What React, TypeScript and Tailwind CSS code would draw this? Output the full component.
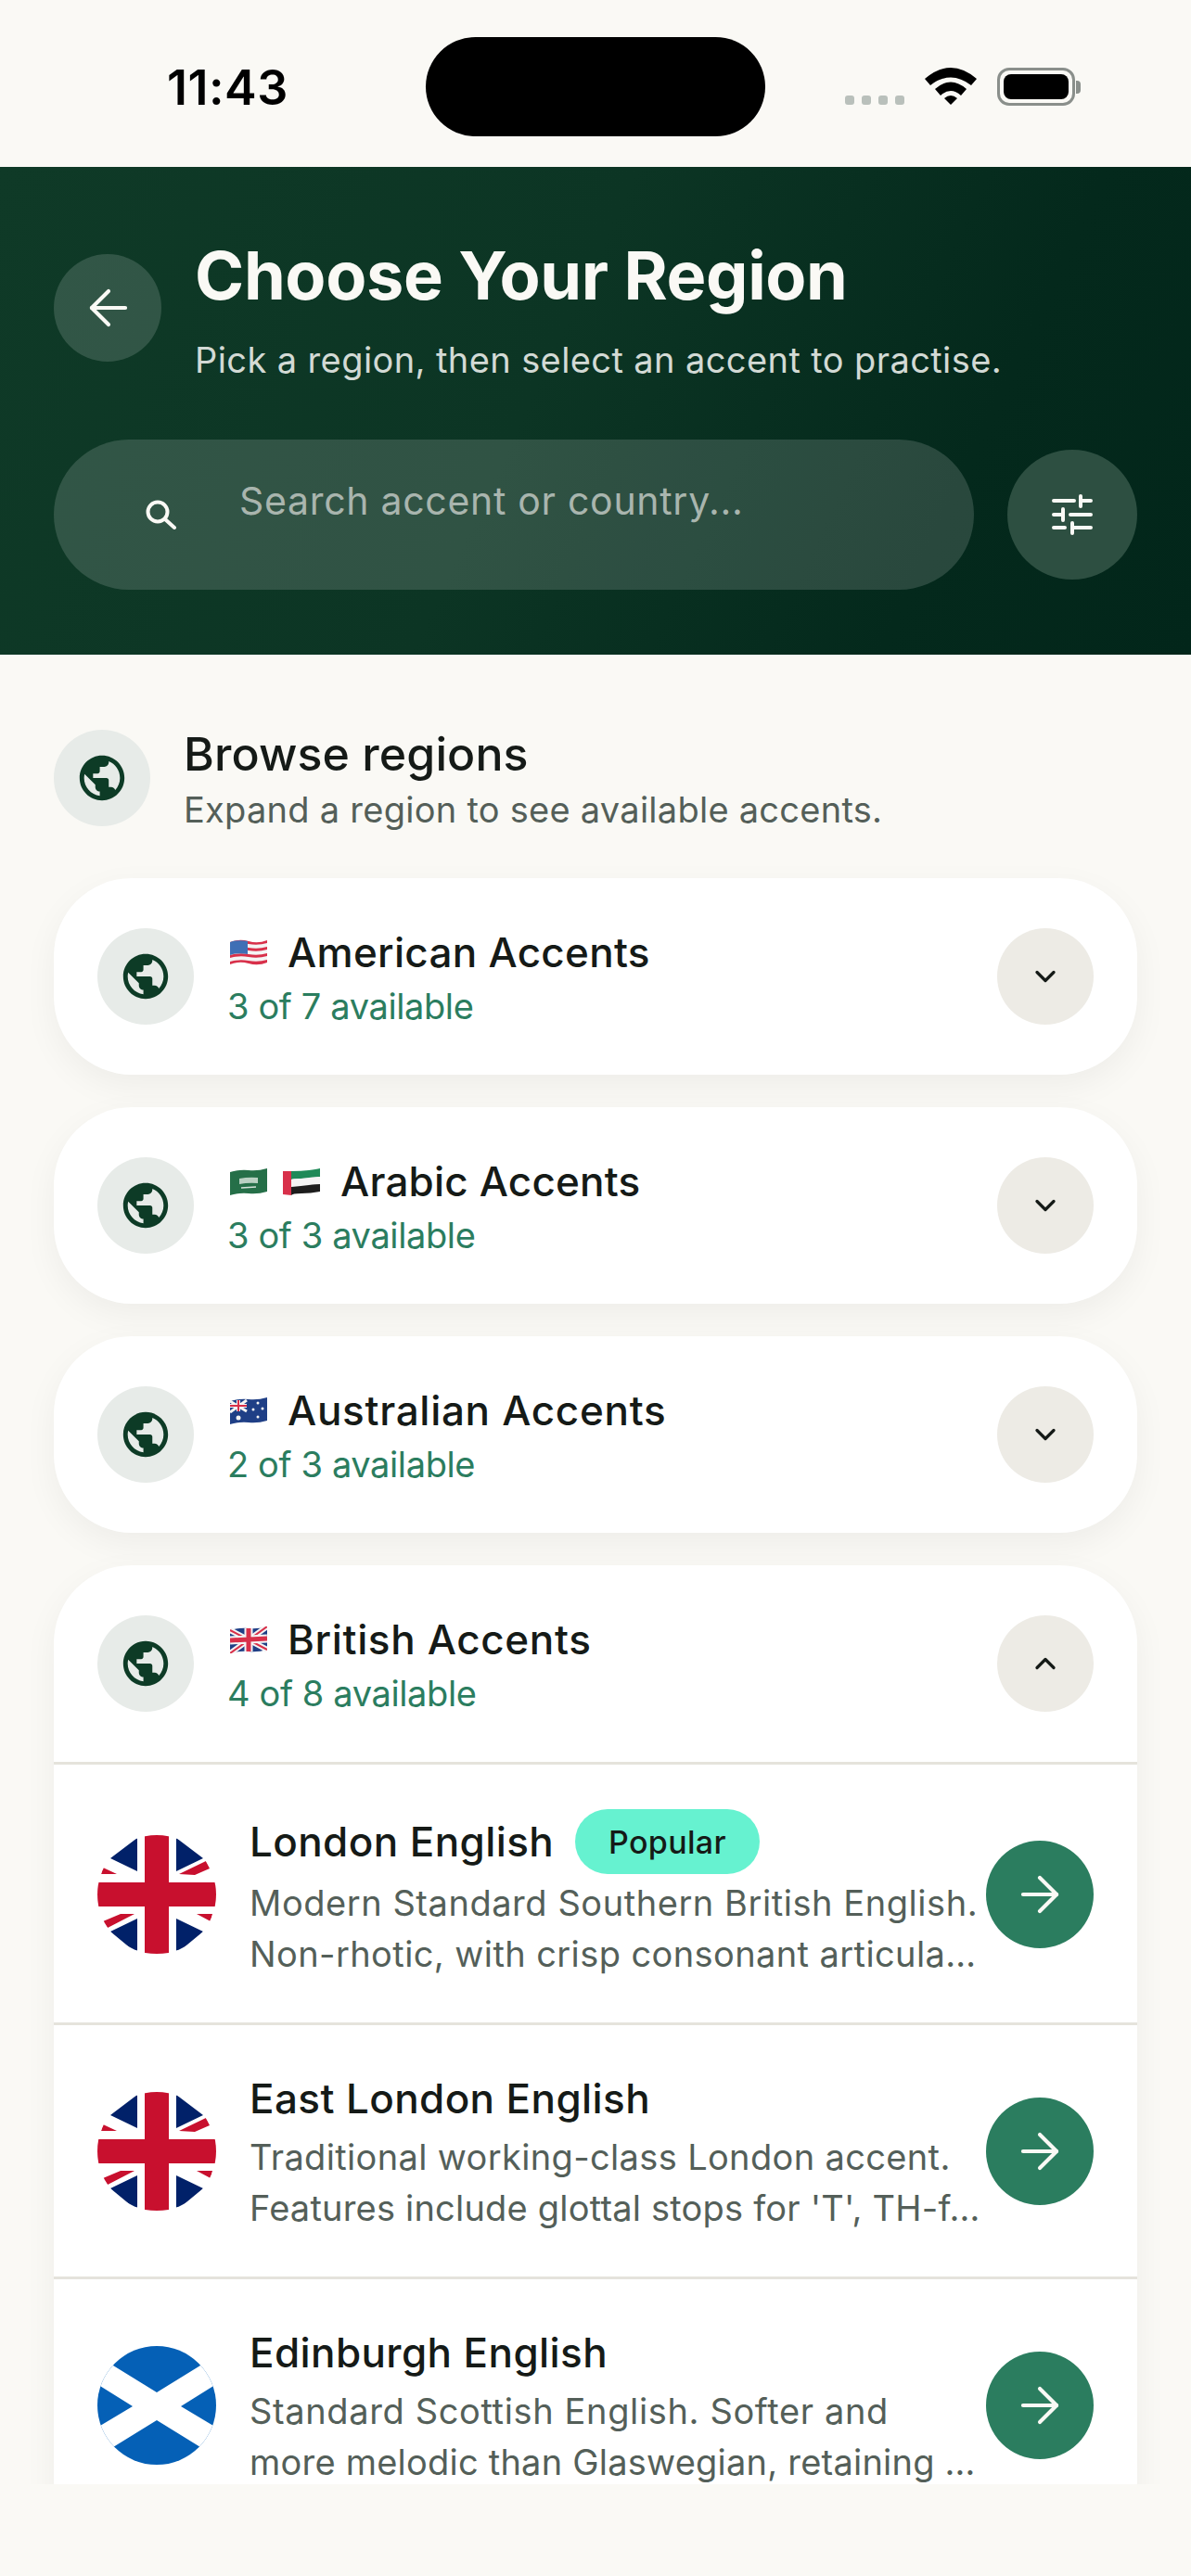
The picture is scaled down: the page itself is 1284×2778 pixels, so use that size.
import { ArrowLeft, ArrowRight, ChevronDown, ChevronUp } from "lucide-react";
import { MdPublic } from "react-icons/md";

const FONT = "font-['Inter','Liberation_Sans',sans-serif]";

const UsFlag = () => (
    <svg viewBox="0 0 40 29" className="w-[40px] h-[29px]">
        <path d="M0 3 Q10 -1 20 2 T40 1 V25 Q30 29 20 26 T0 27 Z" fill="#f4f4f4" />
        <path d="M0 3 Q10 -1 20 2 T40 1 V4 Q30 7 20 5 T0 6 Z" fill="#d8304a" />
        <path d="M0 10 Q10 7 20 9 T40 8 V11 Q30 14 20 12 T0 13 Z" fill="#d8304a" />
        <path d="M0 17 Q10 14 20 16 T40 15 V18 Q30 21 20 19 T0 20 Z" fill="#d8304a" />
        <path d="M0 24 Q10 21 20 23 T40 22 V25 Q30 29 20 26 T0 27 Z" fill="#d8304a" />
        <path d="M0 3 Q9 0 19 2 V16 Q9 14 0 17 Z" fill="#3f6fb5" />
    </svg>
);

const UkFlag = () => (
    <svg viewBox="0 0 40 29" className="w-[40px] h-[29px]">
        <path d="M0 4 Q10 1 20 2 T40 0 V25 Q30 28 20 27 T0 29 Z" fill="#1f3f86" />
        <path d="M0 4 L40 25 M40 0 L0 29" stroke="#f4f4f4" strokeWidth="6" />
        <path d="M0 4 L40 25 M40 0 L0 29" stroke="#d8304a" strokeWidth="2" />
        <path d="M20 2 V27 M0 15 L40 13" stroke="#f4f4f4" strokeWidth="9" />
        <path d="M20 2 V27 M0 15 L40 13" stroke="#d8304a" strokeWidth="5" />
    </svg>
);

const AuFlag = () => (
    <svg viewBox="0 0 40 29" className="w-[40px] h-[29px]">
        <path d="M0 4 Q10 1 20 2 T40 0 V25 Q30 28 20 27 T0 29 Z" fill="#1f3f86" />
        <path d="M0 4 L18 15 M18 3 L0 16" stroke="#f4f4f4" strokeWidth="3" />
        <path d="M9 3 V15 M0 9 H18" stroke="#f4f4f4" strokeWidth="4" />
        <path d="M9 3 V15 M0 9 H18" stroke="#d8304a" strokeWidth="2" />
        <circle cx="9" cy="22" r="2.5" fill="#f4f4f4" />
        <circle cx="30" cy="6" r="1.5" fill="#f4f4f4" />
        <circle cx="25" cy="13" r="1.5" fill="#f4f4f4" />
        <circle cx="35" cy="12" r="1.5" fill="#f4f4f4" />
        <circle cx="30" cy="21" r="1.5" fill="#f4f4f4" />
    </svg>
);

const SaFlag = () => (
    <svg viewBox="0 0 40 29" className="w-[40px] h-[29px]">
        <path d="M0 4 Q10 1 20 2 T40 0 V25 Q30 28 20 27 T0 29 Z" fill="#256f48" />
        <path d="M10 11 Q20 9 30 10 V16 Q20 15 10 17 Z" fill="#b9d0c2" />
        <path d="M12 21 L28 20" stroke="#d5e2da" strokeWidth="1.5" />
    </svg>
);

const AeFlag = () => (
    <svg viewBox="0 0 40 29" className="w-[40px] h-[29px]">
        <path d="M0 3 L9 3 V29 L0 28 Z" fill="#d8304a" />
        <path d="M9 3 Q20 3 28 2 T40 0 V9 Q30 11 20 11 T9 12 Z" fill="#1f8a58" />
        <path d="M9 12 Q20 11 28 10 T40 9 V17 Q30 19 20 19 T9 20 Z" fill="#f4f4f4" />
        <path d="M9 20 Q20 19 28 18 T40 17 V25 Q30 27 20 27 T9 29 Z" fill="#1d1d1d" />
    </svg>
);

const UnionJack = () => (
    <svg viewBox="0 0 128 128" className="w-[128px] h-[128px] shrink-0">
        <clipPath id="ukClip"><circle cx="64" cy="64" r="64" /></clipPath>
        <g clipPath="url(#ukClip)">
            <rect width="128" height="128" fill="#ffffff" />
            <path d="M14 25 L43 39 V3 Z M85 3 V39 L114 25 Z M14 104 L43 90 V128 Z M85 90 V128 L114 104 Z" fill="#012169" />
            <path d="M6 35 L21 42 H4 Z M88 42 L117 28 L121 36 L105 43 Z M40 85 H25 L6 93 L11 100 Z M107 85 H124 L122 93 Z" fill="#c8102e" />
            <path d="M51 0 H77 V51 H128 V77 H77 V128 H51 V77 H0 V51 H51 Z" fill="#c8102e" />
        </g>
    </svg>
);

const Saltire = () => (
    <svg viewBox="0 0 128 128" className="w-[128px] h-[128px] shrink-0">
        <clipPath id="scClip"><circle cx="64" cy="64" r="64" /></clipPath>
        <g clipPath="url(#scClip)">
            <rect width="128" height="128" fill="#0560b6" />
            <path d="M64 50 L140 3 L170 15 L90 65 L170 113 L140 127 L64 80 L-12 127 L-42 113 L38 65 L-42 15 L-12 3 Z" fill="#ffffff" />
        </g>
    </svg>
);

const TuneIcon = () => (
    <svg viewBox="0 0 44 44" className="w-[44px] h-[44px]" fill="none" stroke="#faf9f5" strokeWidth="4" strokeLinecap="round">
        <path d="M2 7 H24 M31 2 V13 M31 7 H42 M2 22 H12 M12 16 V28 M20 22 H42 M2 36 H14 M22 31 V42 M22 36 H42" />
    </svg>
);

const SearchIcon = () => (
    <svg viewBox="0 0 34 32" className="w-[34px] h-[32px] shrink-0" fill="none" stroke="#faf9f5" strokeWidth="4" strokeLinecap="round">
        <circle cx="13" cy="13" r="10.5" />
        <path d="M21 21 L31 30" />
    </svg>
);

const WifiIcon = () => (
    <svg viewBox="0 0 56 42" className="w-[56px] h-[42px]">
        <path d="M0 13 Q28 -11 56 13 L50 20 Q28 3 6 20 Z" fill="#000" />
        <path d="M11 24 Q28 9 45 24 L39 31 Q28 21 17 31 Z" fill="#000" />
        <path d="M21 34 Q28 28 35 34 L28 41 Z" fill="#000" />
    </svg>
);

const GlobeBadge = () => (
    <div className="w-[104px] h-[104px] rounded-full bg-[#e7ebe8] flex items-center justify-center shrink-0">
        <MdPublic size={58} color="#0d3b26" />
    </div>
);

const regions = [
    { name: "American Accents", count: "3 of 7 available", flags: [UsFlag], tracking: "tracking-[0.3px]" },
    { name: "Arabic Accents", count: "3 of 3 available", flags: [SaFlag, AeFlag], tracking: "tracking-[0.2px]" },
    { name: "Australian Accents", count: "2 of 3 available", flags: [AuFlag], tracking: "tracking-[0.7px]" },
];

const british = { name: "British Accents", count: "4 of 8 available", flags: [UkFlag], tracking: "tracking-[0.65px]" };

const accents = [
    {
        name: "London English",
        flag: UnionJack,
        popular: true,
        rowClass: "h-[281px] pt-[2px]",
        lines: [
            { text: "Modern Standard Southern British English.", tracking: "tracking-[0.55px]" },
            { text: "Non-rhotic, with crisp consonant articula…", tracking: "tracking-[0.4px]" },
        ],
    },
    {
        name: "East London English",
        flag: UnionJack,
        popular: false,
        rowClass: "h-[274px]",
        lines: [
            { text: "Traditional working-class London accent.", tracking: "tracking-[0.35px]" },
            { text: "Features include glottal stops for 'T', TH-f…", tracking: "tracking-[0.2px]" },
        ],
    },
    {
        name: "Edinburgh English",
        flag: Saltire,
        popular: false,
        rowClass: "h-[274px]",
        lines: [
            { text: "Standard Scottish English. Softer and", tracking: "tracking-[0.63px]" },
            { text: "more melodic than Glaswegian, retaining …", tracking: "tracking-[0.22px]" },
        ],
    },
];

type Region = { name: string; count: string; flags: (() => React.ReactElement)[]; tracking: string };

const RegionHeader = ({ region, open }: { region: Region; open?: boolean }) => (
    <div className="h-[212px] px-[47px] flex items-center shrink-0">
        <GlobeBadge />
        <div className="ml-[39px] flex-1 pt-[2px]">
            <div className="flex items-center h-[56px]">
                {region.flags.map((Flag, i) => (
                    <span key={i} className="mr-[17px] flex"><Flag /></span>
                ))}
                <span className={`ml-[5px] text-[44px] leading-[56px] font-medium text-[#151a17] ${region.tracking}`}>{region.name}</span>
            </div>
            <div className="mt-[6px] -ml-[3px] text-[38px] leading-[48px] text-[#2b7d5f] tracking-[-0.01em]">{region.count}</div>
        </div>
        <div className="w-[104px] h-[104px] rounded-full bg-[#edebe5] flex items-center justify-center shrink-0">
            {open ? <ChevronUp size={36} color="#151a17" strokeWidth={2.2} /> : <ChevronDown size={36} color="#151a17" strokeWidth={2.2} />}
        </div>
    </div>
);

export default function App() {
    return (
        <div className={`w-[1284px] h-[2778px] bg-[#faf9f5] flex flex-col overflow-hidden ${FONT}`}>
            {/* status bar */}
            <div className="h-[180px] shrink-0 flex items-start pl-[180px] pr-[119px]">
                <div className="w-[130px] mt-[66px] text-[52px] leading-[58px] font-semibold text-black whitespace-nowrap tracking-[0.5px]">11:43</div>
                <div className="ml-[149px] mt-[40px] w-[366px] h-[107px] rounded-full bg-black" />
                <div className="ml-[86px] mt-[72px] flex items-end gap-[22px]">
                    <div className="flex gap-[8px] pb-[1px]">
                        <span className="w-[10px] h-[10px] rounded-[3px] bg-[#b9c0bb]" />
                        <span className="w-[10px] h-[10px] rounded-[3px] bg-[#b9c0bb]" />
                        <span className="w-[10px] h-[10px] rounded-[3px] bg-[#b9c0bb]" />
                        <span className="w-[10px] h-[10px] rounded-[3px] bg-[#b9c0bb]" />
                    </div>
                    <WifiIcon />
                    <div className="flex items-center">
                        <div className="w-[84px] h-[41px] rounded-[13px] border-[3px] border-[#8a8f8b] p-[4px]">
                            <div className="w-full h-full rounded-[8px] bg-black" />
                        </div>
                        <span className="w-[5px] h-[14px] rounded-r-[4px] bg-[#8a8f8b] ml-[1px]" />
                    </div>
                </div>
            </div>

            {/* header */}
            <div className="shrink-0 px-[58px] pt-[70px] pb-[70px] bg-[linear-gradient(115deg,#0f3a27_0%,#0c3524_45%,#04291c_78%,#02261a_100%)]">
                <div className="flex items-center gap-[35px]">
                    <button className="w-[116px] h-[116px] rounded-full bg-white/15 flex items-center justify-center shrink-0 pl-[2px]">
                        <ArrowLeft size={62} color="#faf9f5" strokeWidth={1.6} />
                    </button>
                    <div className="pl-[1px]">
                        <h1 className="text-[72px] leading-[94px] font-bold text-[#faf9f5] tracking-[-0.36px] whitespace-nowrap">Choose Your Region</h1>
                        <p className="mt-[18px] text-[38px] leading-[52px] text-[#d3dad5] tracking-[0.4px] whitespace-nowrap">Pick a region, then select an accent to practise.</p>
                    </div>
                </div>
                <div className="mt-[60px] flex items-center gap-[36px]">
                    <div className="flex-1 h-[162px] rounded-full bg-white/15 flex items-center pl-[99px]">
                        <SearchIcon />
                        <input
                            className="ml-[67px] flex-1 mb-[30px] bg-transparent outline-none text-[41px] leading-[52px] tracking-[0.7px] placeholder:text-[#a9b5ae]"
                            placeholder="Search accent or country..."
                        />
                    </div>
                    <button className="w-[140px] h-[140px] rounded-full bg-[#2d4f41] flex items-center justify-center shrink-0">
                        <TuneIcon />
                    </button>
                </div>
            </div>

            {/* main */}
            <div className="h-[1973px] shrink-0 overflow-hidden px-[58px] pt-[81px]">
                <div className="flex items-start gap-[36px]">
                    <GlobeBadge />
                    <div>
                        <h2 className="text-[50px] leading-[52px] font-medium text-[#151a17] tracking-[0.1px]">Browse regions</h2>
                        <p className="mt-[9px] text-[38px] leading-[50px] text-[#545f59] tracking-[0.26px] whitespace-nowrap">Expand a region to see available accents.</p>
                    </div>
                </div>

                <div className="mt-[49px] flex flex-col gap-[35px]">
                    {regions.map((region) => (
                        <div key={region.name} className="rounded-[84px] bg-white shadow-[0_12px_36px_rgba(0,0,0,0.05)]">
                            <RegionHeader region={region} />
                        </div>
                    ))}

                    <div className="rounded-t-[84px] bg-white shadow-[0_12px_36px_rgba(0,0,0,0.05)]">
                        <div className="border-b-[3px] border-[#e5e3dc]">
                            <RegionHeader region={british} open />
                        </div>
                        {accents.map((accent) => (
                            <div
                                key={accent.name}
                                className={`border-b-[3px] border-[#e5e3dc] px-[47px] flex items-center gap-[36px] ${accent.rowClass}`}
                            >
                                <accent.flag />
                                <div className="flex-1 min-w-0">
                                    <div className="flex items-center">
                                        <span className={`text-[44px] font-medium text-[#151a17] tracking-[0.4px] whitespace-nowrap ${accent.popular ? "leading-[70px]" : "leading-[64px]"}`}>
                                            {accent.name}
                                        </span>
                                        {accent.popular && (
                                            <span className="ml-[23px] h-[70px] px-[36px] rounded-full bg-[#66f2d0] flex items-center text-[34px] font-medium text-[#151a17] tracking-[0.3px]">
                                                Popular
                                            </span>
                                        )}
                                    </div>
                                    <div className="mt-[4px] text-[38px] leading-[55px] text-[#545f59] whitespace-nowrap">
                                        {accent.lines.map((line) => (
                                            <div key={line.text} className={line.tracking}>{line.text}</div>
                                        ))}
                                    </div>
                                </div>
                                <div className="w-[116px] h-[116px] rounded-full bg-[#2b7d5f] flex items-center justify-center shrink-0 -ml-[25px]">
                                    <ArrowRight size={62} color="#faf9f5" strokeWidth={1.6} />
                                </div>
                            </div>
                        ))}
                    </div>
                </div>
            </div>
        </div>
    );
}
